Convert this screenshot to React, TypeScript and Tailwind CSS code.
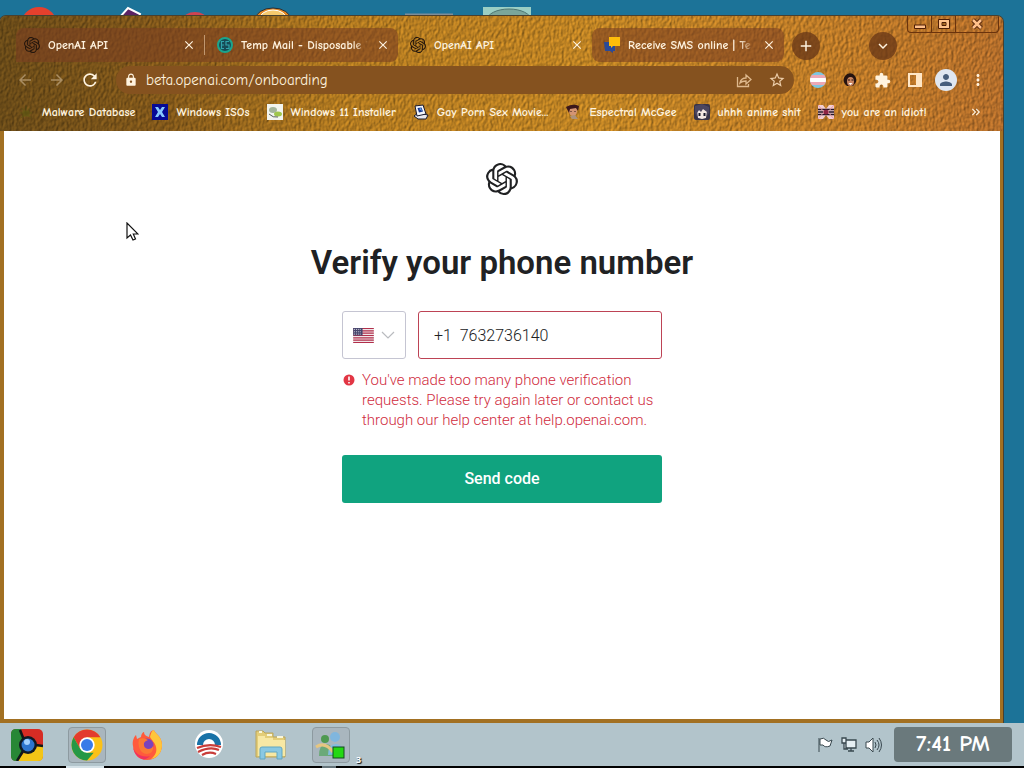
import React, { useState } from 'react';
import type { ReactNode } from 'react';
import { SiOpenai } from 'react-icons/si';
import { MdLock, MdRefresh, MdArrowBack, MdArrowForward, MdExtension, MdStarBorder, MdAdd, MdClose, MdKeyboardArrowDown, MdMoreVert, MdPerson, MdKeyboardDoubleArrowRight } from 'react-icons/md';

const comic = "font-['Comic_Neue','Lato',sans-serif]";
const colfax = "font-['Colfax','Roboto',sans-serif]";

function LeatherTexture() {
  return (
    <svg className="pointer-events-none absolute inset-0 h-full w-full" aria-hidden="true">
      <defs>
        <filter id="leather" x="0" y="0" width="100%" height="100%" colorInterpolationFilters="sRGB">
          <feTurbulence type="fractalNoise" baseFrequency="0.38 0.24" numOctaves="2" seed="7" result="noise" />
          <feDiffuseLighting in="noise" surfaceScale="0.7" lightingColor="#ffffff" result="light">
            <feDistantLight azimuth="215" elevation="50" />
          </feDiffuseLighting>
          <feComposite in="light" in2="SourceGraphic" operator="arithmetic" k1="1.3" k2="0" k3="0" k4="0" />
        </filter>
        <linearGradient id="hide" x1="0" y1="0" x2="1" y2="0">
          <stop offset="0" stopColor="#6a4b18" />
          <stop offset="0.16" stopColor="#82581a" />
          <stop offset="0.34" stopColor="#b27a20" />
          <stop offset="0.6" stopColor="#c08424" />
          <stop offset="0.85" stopColor="#bd7a28" />
          <stop offset="1" stopColor="#b46e2b" />
        </linearGradient>
      </defs>
      <rect width="100%" height="100%" fill="url(#hide)" filter="url(#leather)" />
    </svg>
  );
}

function DesktopIcons() {
  return (
    <svg className="absolute left-0 top-0 h-4 w-full" aria-hidden="true">
      <circle cx="39" cy="25" r="18" fill="#e4402d" />
      <path d="M120 17 128 8 140 14 139 17Z" fill="#5b2364" stroke="#fff" strokeWidth="2" />
      <ellipse cx="195" cy="20" rx="12" ry="8" fill="#cf4351" />
      <ellipse cx="273" cy="20" rx="18" ry="12" fill="#e58a26" stroke="#222c38" />
      <ellipse cx="273" cy="20" rx="14" ry="10" fill="#f6c96e" stroke="#fff" />
      <path d="M405 14.500h48" stroke="#7f8d98" strokeWidth="2" />
      <path d="M483 7h48v10h-48z" fill="#9bcfc4" />
      <ellipse cx="509" cy="20" rx="22" ry="11" fill="#7aa69b" stroke="#4d7772" />
    </svg>
  );
}

type TabProps = { title: string; icon: ReactNode; active?: boolean; shape: string };

function Tab({ title, icon, active, shape }: TabProps) {
  return (
    <div className={`flex h-[34px] items-center gap-2 ${shape} ${active ? '' : 'bg-[#7b3f22]/60'}`}>
      <button role="tab" aria-selected={!!active} className="flex min-w-0 flex-1 items-center gap-2 text-left">
        <span className="shrink-0">{icon}</span>
        <span className={`min-w-0 flex-1 overflow-hidden whitespace-nowrap ${active ? '' : '[mask-image:linear-gradient(to_right,black_88%,transparent)]'}`}>{title}</span>
      </button>
      <button aria-label={`Close ${title}`} className="shrink-0"><MdClose size={14} /></button>
    </div>
  );
}

function TempMailIcon() {
  return (
    <svg width="16" height="16" viewBox="0 0 16 16">
      <circle cx="8" cy="8" r="7" fill="#174b56" stroke="#1aa58d" strokeWidth="2" />
      <path d="M7 4.500H4.500v7H7M4.500 8H7M12 4.500H9v3.500h3v3.500H9" fill="none" stroke="#31a3ac" strokeWidth="1.200" />
    </svg>
  );
}

function SmsIcon() {
  return (
    <svg width="16" height="16" viewBox="0 0 16 16">
      <path d="M0 5h11v9H9v2l-3-2H1z" fill="#2b4a98" />
      <path d="M5 0h11v9H9l-2 2V9H5z" fill="#ffbd0a" />
    </svg>
  );
}

const bookmarks: { label: string; icon: ReactNode }[] = [
  {
    label: 'Malware Database',
    icon: <path d="M8 2v4M4 4l2 3M12 4l-2 3M2 9h3M11 9h3M3 14l3-3M13 14l-3-3M5 7h6v5H5z" fill="#5d5a12" stroke="#5d5a12" opacity=".6" />,
  },
  {
    label: 'Windows ISOs',
    icon: <><path d="M0 0h16v16H0z" fill="#060a96" /><path d="M3 3h3l2 3 2-3h3l-3 5 3 5h-3l-2-3-2 3H3l3-5z" fill="#86c8ff" /></>,
  },
  {
    label: 'Windows 11 Installer',
    icon: <><path d="M0 0h16v16H0z" fill="#f2f4ef" /><ellipse cx="6" cy="6" rx="4" ry="3" fill="#a3b59b" /><ellipse cx="11" cy="10" rx="4" ry="2.500" fill="#9fc64b" /><path d="M2 10q4 4 9 3" stroke="#575f5a" fill="none" /></>,
  },
  {
    label: 'Gay Porn Sex Movie...',
    icon: <><path d="m1 12 4-3 10 2-2 4H5z" fill="#e9e9ef" stroke="#191a2d" /><path d="m2 2 8-1 3 9-9 2z" fill="#f3f5fb" stroke="#191a2d" /><path d="m4.500 4 4-.5 1.500 4-4 1z" fill="#16358b" /><path d="m6 5 2-1 1 3" fill="#69a8f2" /></>,
  },
  {
    label: 'Espectral McGee',
    icon: <><ellipse cx="8" cy="7" rx="4" ry="5" fill="#d49472" /><path d="M1 3q7-4 13-1l-1 5-2-3-6 1-1 4z" fill="#3b171b" /><path d="M6 7v1M10 7v1" stroke="#2c1712" /><path d="m5 12 5-1 3 4H7z" fill="#ad927a" /></>,
  },
  {
    label: 'uhhh anime shit',
    icon: <><rect width="16" height="16" rx="2" fill="#383349" /><path d="M3 7l5-3 5 3-1 7-4 1-4-1z" fill="#f4e8e4" /><path d="M1 2 8 0l7 3v6l-2 3V8L9 5 7 8 5 6l-2 3v4L1 9z" fill="#4c4660" /><path d="M5.500 9v3M10.500 9v3" stroke="#171729" strokeWidth="2" /></>,
  },
  {
    label: 'you are an idiot!',
    icon: <><path d="M0 1h5l3 4 3-4h5v14h-5l-3-4-3 4H0z" fill="#f3cfd3" /><path d="M0 5.500h16M0 8h16M0 10.500h16" stroke="#251627" strokeWidth="1.300" /><path d="m0 1 6 7-6 7M16 1l-6 7 6 7" fill="none" stroke="#e79aa9" /><circle cx="8" cy="8" r="2.500" fill="#8e2443" /></>,
  },
];

function TabStrip() {
  return (
    <div className="relative flex pt-3 text-[12px] font-bold leading-4">
      <div role="tablist" className="flex min-w-0 flex-1 pl-3">
        <Tab title="OpenAI API" icon={<SiOpenai size={16} className="text-[#23160d]" />} shape="w-[188px] rounded-tl-lg px-2" />
        <div className="flex items-center bg-[#7b3f22]/60"><span className="h-5 w-px bg-[#c09770]" /></div>
        <Tab title="Temp Mail - Disposable T" icon={<TempMailIcon />} shape="w-[193px] rounded-r-lg pl-3 pr-2" />
        <Tab active title="OpenAI API" icon={<SiOpenai size={16} className="text-[#23160d]" />} shape="w-[194px] pl-3 pr-2" />
        <Tab title="Receive SMS online | Te" icon={<SmsIcon />} shape="w-[192px] rounded-lg pl-3 pr-2" />
        <button aria-label="New tab" className="ml-2 mt-1 flex size-7 items-center justify-center rounded-full bg-[#6b3a18]/80"><MdAdd size={18} /></button>
      </div>
      <button aria-label="Search tabs" className="mr-[102px] mt-1 flex size-7 items-center justify-center rounded-full bg-[#6b3a18]/80"><MdKeyboardArrowDown size={18} /></button>
    </div>
  );
}

function WindowControls() {
  return (
    <div className="absolute right-1 top-0 flex h-[17px] divide-x divide-[#6b330c] rounded-b border border-t-0 border-[#6b330c]">
      <button aria-label="Minimize" className="flex w-6 items-center justify-center">
        <svg width="14" height="12" viewBox="0 0 14 12"><path d="M1.500 7h11v3.500h-11z" fill="#ffc08a" stroke="#4e1d06" /></svg>
      </button>
      <button aria-label="Maximize" className="flex w-6 items-center justify-center">
        <svg width="14" height="12" viewBox="0 0 14 12"><path d="M1.500 1.500h11v9h-11zM5 4.500h4v3H5z" fill="#ffc08a" fillRule="evenodd" stroke="#4e1d06" /></svg>
      </button>
      <button aria-label="Close" className="flex w-[42px] items-center justify-center">
        <svg width="14" height="12" viewBox="0 0 14 12"><path d="m3 2 8 8m0-8-8 8" stroke="#4e1d06" strokeWidth="4.500" /><path d="m3 2 8 8m0-8-8 8" stroke="#ffc08a" strokeWidth="2.500" /></svg>
      </button>
    </div>
  );
}

function Toolbar() {
  return (
    <div className="relative flex h-9 items-center gap-4 pl-3 pr-4">
      <div className="flex items-center gap-[14px]">
        <button aria-label="Back" className="text-[#aa8d62]"><MdArrowBack size={18} /></button>
        <button aria-label="Forward" className="text-[#aa8d62]"><MdArrowForward size={18} /></button>
        <button aria-label="Reload"><MdRefresh size={20} /></button>
      </div>
      <div className="flex h-7 flex-1 items-center rounded-full bg-[#85521f] pl-2 pr-2">
        <MdLock size={14} className="shrink-0" />
        <input aria-label="Address" defaultValue="beta.openai.com/onboarding" className="ml-2 min-w-0 flex-1 bg-transparent text-[15px] font-medium outline-none" />
        <button aria-label="Share" className="mr-4">
          <svg width="16" height="16" viewBox="0 0 16 16"><path d="M1.500 5v9.500h11V12M4 11q1-5 6-5V3l5 4.500-5 4.500V9Q6 9 4 11z" fill="none" stroke="#dfb98d" strokeWidth="1.300" /></svg>
        </button>
        <button aria-label="Bookmark this page" className="text-[#eccda9]"><MdStarBorder size={18} /></button>
      </div>
      <button aria-label="Pride extension">
        <svg width="16" height="16" viewBox="0 0 16 16">
          <clipPath id="ball"><circle cx="8" cy="8" r="8" /></clipPath>
          <g clipPath="url(#ball)"><path d="M0 0h16v16H0z" fill="#7dc7e2" /><path d="M0 3h16v10H0z" fill="#eda8b5" /><path d="M0 6h16v4H0z" fill="#fff" /></g>
        </svg>
      </button>
      <button aria-label="Portrait extension">
        <svg width="16" height="16" viewBox="0 0 16 16"><path d="M3 12Q0 8 3 4q3-4 8-2 4 3 3 8l-3 4H5z" fill="#25130f" /><ellipse cx="8.500" cy="9.500" rx="3.500" ry="4.500" fill="#c98560" /><path d="M6 8h2M9.500 8h2" stroke="#251410" /><path d="M6.500 11h4l-2 2z" fill="#fff" /></svg>
      </button>
      <button aria-label="Extensions"><MdExtension size={17} /></button>
      <button aria-label="Side panel"><svg width="16" height="16" viewBox="0 0 16 16"><path d="M1 1h14v14H1zM3 3v10h6V3z" fill="#ffe7c7" fillRule="evenodd" /></svg></button>
      <div className="-mx-1 flex items-center gap-3">
        <button aria-label="Profile" className="flex size-[22px] items-center justify-center rounded-full bg-[#dfe7f2] text-[#475e7c]"><MdPerson size={18} /></button>
        <button aria-label="Chrome menu"><MdMoreVert size={18} /></button>
      </div>
    </div>
  );
}

function BookmarksBar() {
  return (
    <nav aria-label="Bookmarks" className="relative flex h-[33px] items-center gap-[17px] whitespace-nowrap pb-[6px] pl-[14px] pr-4 text-[12px] font-bold">
      {bookmarks.map((item) => (
        <a key={item.label} href="#bookmark" className="flex items-center gap-2">
          <svg className="size-4 shrink-0" viewBox="0 0 16 16">{item.icon}</svg>
          <span>{item.label}</span>
        </a>
      ))}
      <button aria-label="More bookmarks" className="ml-auto"><MdKeyboardDoubleArrowRight size={14} /></button>
    </nav>
  );
}

function UsFlag() {
  return (
    <svg width="21" height="15" viewBox="0 0 22 16" aria-hidden="true">
      <path d="M0 0h22v16H0z" fill="#f0e5e8" />
      <path d="M0 .5h22M0 3h22M0 5.500h22M0 8h22M0 10.500h22M0 13h22M0 15.500h22" stroke="#b12f4b" strokeWidth="1.300" />
      <path d="M0 0h10v8H0z" fill="#47466d" />
      <path d="M1 1.500h8M1 4h8M1 6.500h8" stroke="#d9d9e3" strokeDasharray="1 1" />
    </svg>
  );
}

function VerifyForm() {
  const [phone, setPhone] = useState('+1  7632736140');
  return (
    <main className={`flex flex-1 flex-col items-center bg-white pt-8 text-[#202123] ${colfax}`}>
      <SiOpenai size={32} aria-label="OpenAI" />
      <h1 className="mt-12 text-[33px] font-semibold leading-10">Verify your phone number</h1>
      <form className="mt-7 w-[320px]" onSubmit={(event) => event.preventDefault()}>
        <div className="flex gap-3">
          <button type="button" aria-label="Country: United States" className="flex h-12 w-16 items-center justify-between rounded-[3px] border border-[#c5c5d2] px-[10px]">
            <UsFlag />
            <svg width="14" height="8" viewBox="0 0 14 8"><path d="m1 1 6 6 6-6" fill="none" stroke="#b9bbbf" strokeWidth="1.200" /></svg>
          </button>
          <input aria-label="Phone number" aria-describedby="phone-error" aria-invalid="true" value={phone} onChange={(event) => setPhone(event.target.value)} className="h-12 min-w-0 flex-1 whitespace-pre rounded-[3px] border border-[#bd4355] px-[15px] text-base font-light text-[#202123] outline-none" />
        </div>
        <div id="phone-error" className="mt-[11px] flex gap-[6px] text-[15px] font-light leading-5 text-[#d02c40]">
          <svg className="mt-[3px] size-[14px] shrink-0" viewBox="0 0 14 14"><circle cx="7" cy="7" r="5.500" fill="#e23644" /><path d="M7 3.500v4M7 9v1.500" stroke="#fff" strokeWidth="1.600" /></svg>
          <p className="whitespace-nowrap">You've made too many phone verification<br />requests. Please try again later or contact us<br />through our help center at help.openai.com.</p>
        </div>
        <button type="submit" className="mt-[25px] h-12 w-full rounded-[3px] bg-[#10a37f] text-base font-medium text-white">Send code</button>
      </form>
    </main>
  );
}

function TaskIcon({ label, children, open }: { label: string; children: ReactNode; open?: boolean }) {
  return (
    <button aria-label={label} className={`flex h-9 items-center justify-center rounded-sm border ${open ? 'w-[38px] border-[#8d9aa0] bg-[#a9b6be]' : 'w-[42px] border-transparent'}`}>
      <svg className="size-8" viewBox="0 0 32 32">{children}</svg>
    </button>
  );
}

function Taskbar() {
  return (
    <footer className="relative flex h-[45px] items-center border-b-2 border-black bg-[#b2c4cb] pl-[6px] pr-3">
      <span className="absolute -bottom-[2px] left-[66px] h-[2px] w-[38px] bg-[#d5e2e8]" />
      <span className="absolute -bottom-[2px] left-[322px] h-[2px] w-[14px] bg-[#66757b]" />
      <div className="flex items-center gap-5">
        <TaskIcon label="Start">
          <rect width="32" height="32" rx="5" fill="#d62c24" /><path d="M0 5q0-5 5-5h5l3 14 1 7-7 11H5q-5 0-5-5z" fill="#278735" /><path d="m16 20 16-4v11q0 5-5 5H6z" fill="#f3c516" />
          <path d="M9 1l4 10M18 15l14 2M12 22 6 32" stroke="#101719" strokeWidth="2.500" /><circle cx="17" cy="16" r="9" fill="#101923" /><circle cx="17" cy="16" r="6.500" fill="#2d75ce" /><circle cx="16" cy="13" r="3" fill="#a0d0ff" />
        </TaskIcon>
        <TaskIcon label="Google Chrome" open>
          <circle cx="16" cy="16" r="15.500" fill="#fbc116" /><path d="M2.600 8.250a15.500 15.500 0 0 1 26.800 0H16L9.300 20z" fill="#e33b2e" /><path d="M2.600 8.250 9.300 19.900 16 23.750h6.700L16 31.500A15.500 15.500 0 0 1 2.600 8.250z" fill="#269846" />
          <circle cx="16" cy="16" r="7.700" fill="#fff" /><circle cx="16" cy="16" r="6" fill="#397be8" />
        </TaskIcon>
        <TaskIcon label="Firefox">
          <path d="M2 17C1 12 3 8 5 6l1 4 4-2c0-3 2-5 3-5 0 3 2 4 5 5 1-4 1-6 5-7 0 3 8 6 8 15 0 9-7 15-15 15S3 26 2 17z" fill="#ff5a3c" />
          <path d="M19 8c1-4 2-7 4-7 0 3 8 6 8 15 0 8-5 13-11 14 5-4 6-8 5-12-1-5-4-6-6-10z" fill="#ffc53a" />
          <path d="M2 18c2 7 9 11 17 9-3 3-6 4-8 3C6 28 3 24 2 18z" fill="#f0325e" />
          <circle cx="16" cy="16" r="6.500" fill="#7b43bd" /><path d="M8 10q5-2 9 1-3 1-4 3-1 5 4 6 4 0 5-3 1 7-6 8-6 0-8-7-1-5 0-8z" fill="#fb7a35" />
        </TaskIcon>
        <TaskIcon label="Campaign website">
          <circle cx="16" cy="15" r="14" fill="#fff" /><path d="M4 16a12 12 0 0 1 24 0h-6a6 6 0 0 0-12 0z" fill="#1972a7" /><path d="M4 19q12-5 24-1M5 23q12-6 21-2M9 26q7-4 14-1" fill="none" stroke="#c83d3a" strokeWidth="2.200" />
        </TaskIcon>
        <TaskIcon label="File Explorer">
          <path d="M1 5V2h7l2 2h8v4h12v20H1z" fill="#e3cd78" stroke="#baa55a" /><path d="M3 7h7v2h8v2h12v16H3z" fill="#f7e8a4" /><path d="M4 2v2h3V2zM12 5v2h5V5zM22 7v2h6V7z" fill="#f9f6db" /><path d="M5 30V20q0-2 2-2h18q2 0 2 2v10h-5v-7H10v7z" fill="#89c8e2" stroke="#60a7c2" />
        </TaskIcon>
        <TaskIcon label="Messenger" open>
          <circle cx="10" cy="10" r="4" fill="#4f9951" /><circle cx="20" cy="8" r="5" fill="#80b6de" /><path d="M4 27q0-12 7-12t9 12z" fill="#6ba978" /><path d="M13 26q0-11 8-11 7 0 8 10z" fill="#82bce0" /><path d="M1 18q9-6 17 5" fill="none" stroke="#e6c681" strokeWidth="3" /><rect x="18" y="18" width="11" height="11" fill="#23d812" stroke="#164a20" />
        </TaskIcon>
      </div>
      <span className="ml-[6px] self-end text-[9px] font-bold leading-3 text-white [text-shadow:1px_1px_1px_black]">3</span>
      <div className="ml-auto flex items-center gap-2 pr-3">
        <button aria-label="Action center"><svg width="16" height="16" viewBox="0 0 16 16"><path d="M2 1v14M3 2q4-2 6 1t6 0l-2 6q-5 2-7-1H3z" fill="#fff" stroke="#39484f" /></svg></button>
        <button aria-label="Network"><svg width="16" height="16" viewBox="0 0 16 16"><path d="M5 3h10v8H5zM7 14h6M10 11v3M1 1h4v5H1zM3 6v6h4" fill="#e5eff3" stroke="#39484f" strokeWidth="1.300" /></svg></button>
        <button aria-label="Volume"><svg width="17" height="16" viewBox="0 0 17 16"><path d="M1 5h3l4-4v14l-4-4H1z" fill="#fff" stroke="#39484f" /><path d="M10 5q2 3 0 6M12 3q4 5 0 10M14 1q5 7 0 14" fill="none" stroke="#39484f" /></svg></button>
      </div>
      <time className={`flex h-[35px] w-[118px] items-center justify-center rounded-sm bg-[#6a797c] text-[23px] font-bold text-white ${comic}`}>7:41 PM</time>
    </footer>
  );
}

function Cursor() {
  return (
    <svg className="pointer-events-none absolute left-[125px] top-[222px]" width="14" height="20" viewBox="0 0 14 20" aria-hidden="true">
      <path d="M2 1v15l3.500-3 2.500 5 2.500-1-2.200-5H13z" fill="#fff" stroke="#111" strokeWidth="1.200" />
    </svg>
  );
}

export default function App() {
  return (
    <div className="relative flex min-h-screen flex-col bg-[#1c7398]">
      <DesktopIcons />
      <div className="relative mr-[21px] mt-4 flex flex-1 flex-col rounded-t-md border-b-4 border-l-4 border-r-[3px] border-[#a27022] shadow-[0_0_0_1px_#49402f]">
        <header className={`relative -ml-1 -mr-[3px] overflow-hidden rounded-t-md px-1 text-[#fff3df] ${comic}`}>
          <LeatherTexture />
          <TabStrip />
          <Toolbar />
          <BookmarksBar />
          <WindowControls />
        </header>
        <VerifyForm />
      </div>
      <Taskbar />
      <Cursor />
    </div>
  );
}
